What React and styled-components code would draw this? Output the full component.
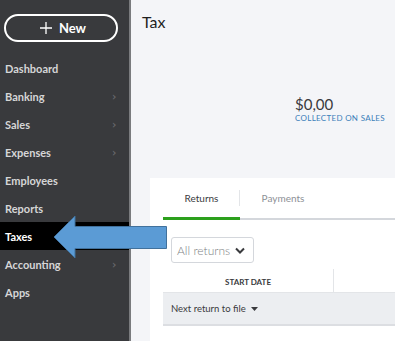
import styled, { createGlobalStyle } from "styled-components";

const GlobalStyle = createGlobalStyle`
  html, body {
    margin: 0;
    padding: 0;
    background: #f4f5f8;
    font-family: "Lato", "Open Sans", sans-serif;
  }
  * { box-sizing: border-box; }
`;

const navItems = [
  { label: "Dashboard" },
  { label: "Banking", more: true },
  { label: "Sales", more: true },
  { label: "Expenses", more: true },
  { label: "Employees" },
  { label: "Reports" },
  { label: "Taxes", active: true },
  { label: "Accounting", more: true },
  { label: "Apps" },
];

const Shell = styled.div`
  position: relative;
  display: flex;
  width: 395px;
  height: 341px;
  overflow: hidden;
`;

const Sidebar = styled.nav`
  width: 131px;
  flex-shrink: 0;
  background: #393a3d;
  border-right: 2px solid #7a7b7e;
  padding-top: 14px;
  display: flex;
  flex-direction: column;
`;

const NewButton = styled.button`
  margin-left: 4px;
  width: 114px;
  height: 28px;
  border: 2px solid #ffffff;
  border-radius: 14px;
  background: transparent;
  color: #ffffff;
  font-family: "Lato", sans-serif;
  font-size: 13px;
  font-weight: 700;
  display: flex;
  align-items: center;
  justify-content: center;
  gap: 7px;
  padding: 0 0 0 4px;
  margin-bottom: 12px;
`;

const NavItem = styled.div`
  height: 28px;
  display: flex;
  align-items: center;
  justify-content: space-between;
  padding: 0 12px 0 5px;
  font-size: 11px;
  font-weight: 700;
  color: ${(p) => (p.$active ? "#ffffff" : "#d6d6d7")};
  background: ${(p) => (p.$active ? "#000000" : "transparent")};
`;

const Chevron = styled.span`
  color: #66676b;
  font-size: 11px;
  transform: scaleX(0.6);
`;

const Main = styled.main`
  flex: 1;
  display: flex;
  flex-direction: column;
  padding-left: 11px;
  min-width: 0;
`;

const Title = styled.h1`
  margin: 12px 0 0;
  font-size: 16px;
  line-height: 20px;
  font-weight: 400;
  color: #1f1f1f;
`;

const Summary = styled.div`
  margin: 63px 0 0 153px;
  display: flex;
  flex-direction: column;
  white-space: nowrap;
`;

const Amount = styled.div`
  font-size: 15px;
  line-height: 18px;
  color: #393a3d;
`;

const AmountLabel = styled.div`
  font-size: 8px;
  line-height: 10px;
  color: #3b7fba;
  letter-spacing: 0.3px;
`;

const Card = styled.section`
  margin: 55px 0 0 8px;
  flex: 1;
  background: #ffffff;
  padding: 0 0 0 13px;
`;

const Tabs = styled.div`
  display: flex;
  height: 42px;
  border-bottom: 2px solid #d4d7dc;
`;

const Tab = styled.div`
  width: ${(p) => p.$w}px;
  display: flex;
  align-items: center;
  justify-content: center;
  font-size: 10px;
  color: ${(p) => (p.$active ? "#393a3d" : "#8d9096")};
  border-bottom: 3px solid ${(p) => (p.$active ? "#2ca01c" : "transparent")};
  margin-bottom: -2px;
  position: relative;
  &::after {
    content: "";
    display: ${(p) => (p.$divider ? "block" : "none")};
    position: absolute;
    right: 0;
    top: 12px;
    height: 16px;
    border-right: 1px solid #e3e5e8;
  }
`;

const Filter = styled.div`
  margin: 17px 0 0 8px;
  width: 83px;
  height: 26px;
  border: 1px solid #d4d7dc;
  border-radius: 3px;
  display: flex;
  align-items: center;
  gap: 5px;
  padding-left: 5px;
  font-size: 12px;
  font-weight: 300;
  color: #7d7f84;
`;

const HeaderRow = styled.div`
  margin-top: 6px;
  display: grid;
  grid-template-columns: 171px 1fr;
  height: 24px;
  border-bottom: 1px solid #e3e5e8;
`;

const HeaderCell = styled.div`
  display: flex;
  align-items: center;
  justify-content: center;
  padding-top: 2px;
  font-size: 8px;
  font-weight: 700;
  color: #393a3d;
  border-right: ${(p) => (p.$divider ? "1px solid #e3e5e8" : "none")};
`;

const GroupRow = styled.div`
  height: 33px;
  background: #eceef1;
  border-bottom: 2px solid #dcdee2;
  display: flex;
  align-items: center;
  gap: 5px;
  padding-left: 8px;
  font-size: 9.5px;
  color: #393a3d;
`;

const Arrow = styled.svg`
  position: absolute;
  left: 52px;
  top: 214px;
`;

export default function App() {
  return (
    <>
      <GlobalStyle />
      <Shell>
        <Sidebar>
          <NewButton>
            <svg width="12" height="12" viewBox="0 0 12 12">
              <path d="M6 0v12M0 6h12" stroke="#fff" strokeWidth="1.3" />
            </svg>
            New
          </NewButton>
          {navItems.map((item) => (
            <NavItem key={item.label} $active={item.active}>
              {item.label}
              {item.more && <Chevron>&gt;</Chevron>}
            </NavItem>
          ))}
        </Sidebar>
        <Main>
          <Title>Tax</Title>
          <Summary>
            <Amount>$0,00</Amount>
            <AmountLabel>COLLECTED ON SALES</AmountLabel>
          </Summary>
          <Card>
            <Tabs>
              <Tab $w={77} $active $divider>
                Returns
              </Tab>
              <Tab $w={86}>Payments</Tab>
            </Tabs>
            <Filter>
              All returns
              <svg width="10" height="7" viewBox="0 0 10 7">
                <path d="M1 1.5l4 4 4-4" fill="none" stroke="#393a3d" strokeWidth="2" />
              </svg>
            </Filter>
            <HeaderRow>
              <HeaderCell $divider>START DATE</HeaderCell>
              <HeaderCell />
            </HeaderRow>
            <GroupRow>
              Next return to file
              <svg width="7" height="4" viewBox="0 0 7 4">
                <path d="M0 0h7L3.5 4z" fill="#393a3d" />
              </svg>
            </GroupRow>
          </Card>
        </Main>
        <Arrow width="118" height="46" viewBox="0 0 118 46">
          <path
            d="M2 23 L23 2 L23 12.5 L114.5 12.5 L114.5 34.5 L23 34.5 L23 44 Z"
            fill="#5b9bd5"
            stroke="#41719c"
            strokeWidth="1"
          />
        </Arrow>
      </Shell>
    </>
  );
}
